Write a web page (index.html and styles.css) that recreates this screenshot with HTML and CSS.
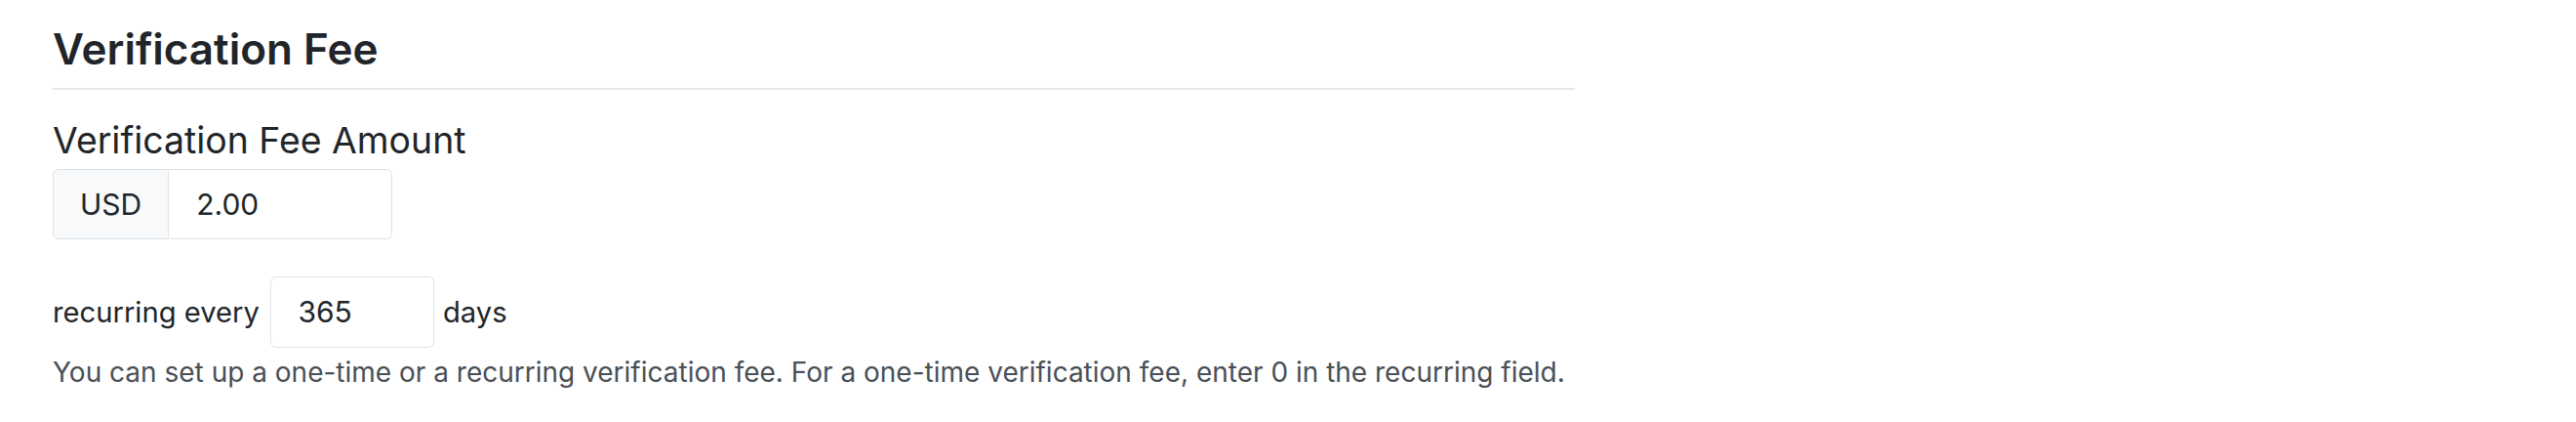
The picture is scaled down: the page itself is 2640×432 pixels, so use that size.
FILE: index.html
```html
<!DOCTYPE html>
<html lang="en">
  <head>
    <meta charset="UTF-8" />
    <meta name="viewport" content="width=device-width, initial-scale=1.0" />
    <title>Verification Fee</title>
    <link rel="stylesheet" href="styles.css">
  </head>

  <body>
    <div class="fee-section">
      <h2 class="section-title">Verification Fee</h2>

      <div class="field">
        <label class="field-label" for="fee-amount">Verification Fee Amount</label>
        <div class="input-group">
          <span class="input-addon">USD</span>
          <input type="text" id="fee-amount" class="input-control amount" value="2.00" />
        </div>
      </div>

      <div class="recurring-row">
        <label for="recurring-days">recurring every</label>
        <input type="text" id="recurring-days" class="input-control days" value="365" />
        <span>days</span>
      </div>
      <p class="help-text">
        You can set up a one-time or a recurring verification fee. For a one-time verification fee, enter 0 in the recurring field.
      </p>
    </div>
  </body>
</html>
```

FILE: styles.css
```css
body {
  margin: 0;
  background: #fff;
  font-family: Inter, "Noto Sans", sans-serif;
  color: #212529;
}

.fee-section {
  width: 1560px;
  padding: 24px 0 0 54px;
  font-size: 28px;
  line-height: 1.5;
}

.section-title {
  margin: 0;
  padding-bottom: 13px;
  font-size: 44px;
  font-weight: 600;
  line-height: 1.2;
  border-bottom: 2px solid #e5e7eb;
}

.field {
  margin-top: 30px;
}

.field-label {
  display: block;
  font-size: 37.4px;
  line-height: 1.2;
  margin-bottom: 6px;
}

.input-group {
  display: flex;
  width: 348px;
}

.input-addon {
  padding: 12.9px 27px;
  font-size: 30px;
  line-height: 1.5;
  background: #f8f9fa;
  border: 1.6px solid #dee2e6;
  border-radius: 6px 0 0 6px;
}

.input-control {
  min-width: 0;
  padding: 12.9px 28px;
  font-family: inherit;
  font-size: 30px;
  line-height: 1.5;
  color: #212529;
  background: #fff;
  border: 1.6px solid #dee2e6;
  border-radius: 6px;
  outline: none;
}

.amount {
  flex: 1;
  border-left: none;
  border-radius: 0 6px 6px 0;
}

.recurring-row {
  display: flex;
  align-items: center;
  margin-top: 38px;
  font-size: 29.2px;
}

.days {
  width: 168px;
  box-sizing: border-box;
  margin: 0 9px 0 11px;
  padding-left: 27.5px;
}

.help-text {
  margin: 4px 0 0;
  color: #495057;
}
```
